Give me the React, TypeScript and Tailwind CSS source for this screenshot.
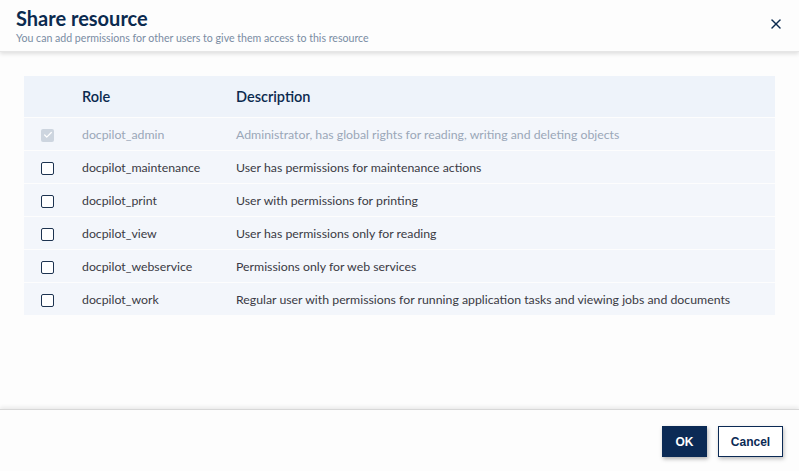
import { X, Check } from 'lucide-react';

const roles = [
  { name: 'docpilot_admin', desc: 'Administrator, has global rights for reading, writing and deleting objects', locked: true },
  { name: 'docpilot_maintenance', desc: 'User has permissions for maintenance actions' },
  { name: 'docpilot_print', desc: 'User with permissions for printing' },
  { name: 'docpilot_view', desc: 'User has permissions only for reading' },
  { name: 'docpilot_webservice', desc: 'Permissions only for web services' },
  { name: 'docpilot_work', desc: 'Regular user with permissions for running application tasks and viewing jobs and documents' },
];

export default function App() {
  return (
    <div className="w-[799px] h-[471px] bg-[#fdfdfd] flex flex-col text-[#2b2b33]" style={{ fontFamily: 'Lato, "Open Sans", sans-serif' }}>
      <header className="h-[52px] shrink-0 flex items-start justify-between pl-4 pr-[15px] pt-[5px] shadow-[0_2px_4px_rgba(0,0,0,0.12)] border-b border-[#e6e6e6] relative z-10">
        <div>
          <h2 className="text-[20px] leading-[26px] font-bold text-[#0b2a4f]">Share resource</h2>
          <p className="text-[10.6px] leading-[14px] text-[#7a8ca3]">You can add permissions for other users to give them access to this resource</p>
        </div>
        <button className="mt-[11px] text-[#0b2a4f]">
          <X size={16} strokeWidth={2.25} />
        </button>
      </header>

      <main className="flex-1 px-6 pt-6">
        <div className="flex flex-col gap-px">
          <div className="h-[41px] bg-[#eef3fa] flex items-center text-[14.5px] font-semibold text-[#0b2a4f]">
            <div className="w-[58px]" />
            <div className="w-[154px]">Role</div>
            <div>Description</div>
          </div>
          {roles.map((r) => (
            <div
              key={r.name}
              className={`h-[32px] pt-[2px] bg-[#f3f6fb] flex items-center text-[12.3px] ${r.locked ? 'text-[#9aa7b8]' : 'text-[#3a3a44]'}`}
            >
              <div className="w-[58px] pl-[17px] flex items-center">
                {r.locked ? (
                  <span className="w-[13px] h-[13px] rounded-[2px] bg-[#cdd5df] flex items-center justify-center text-white">
                    <Check size={10} strokeWidth={3} />
                  </span>
                ) : (
                  <span className="w-[13px] h-[13px] rounded-[2px] border-[1.5px] border-[#1d3350] bg-white" />
                )}
              </div>
              <div className="w-[154px]">{r.name}</div>
              <div>{r.desc}</div>
            </div>
          ))}
        </div>
      </main>

      <footer className="h-[62px] shrink-0 border-t border-[#d8d8d8] shadow-[0_-2px_4px_rgba(0,0,0,0.08)] flex items-center justify-end gap-[11px] pr-4 pt-[2px]" style={{ fontFamily: '"Liberation Sans", Arial, sans-serif' }}>
        <button className="w-[45px] h-[31px] bg-[#0b2a55] text-white text-[12px] font-bold shadow-[1px_2px_4px_rgba(0,0,0,0.3)]">OK</button>
        <button className="w-[65px] h-[31px] bg-white border border-[#0b2a55] text-[#0b2a55] text-[12px] font-bold shadow-[1px_2px_4px_rgba(0,0,0,0.25)]">Cancel</button>
      </footer>
    </div>
  );
}
